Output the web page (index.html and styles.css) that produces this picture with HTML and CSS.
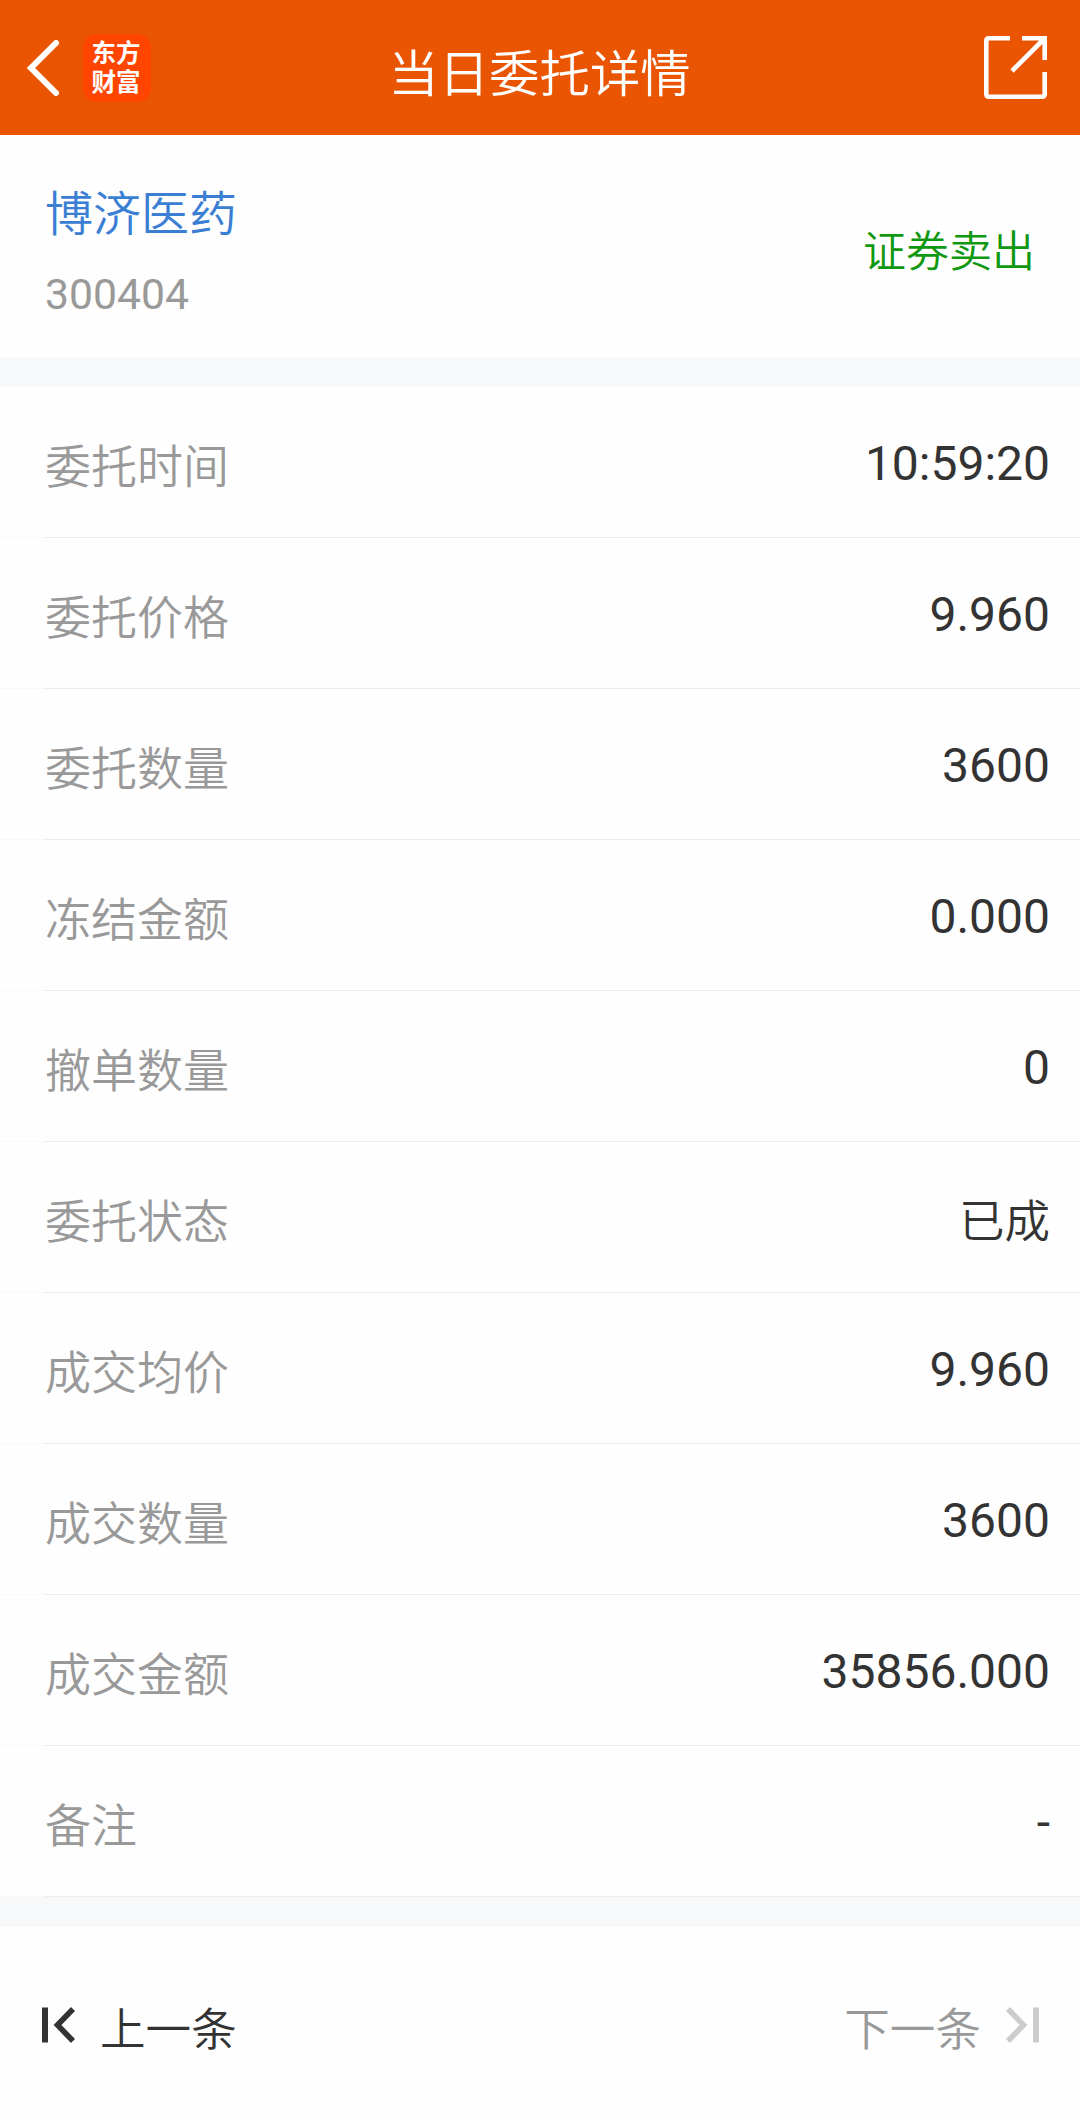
FILE: index.html
```
<!DOCTYPE html>
<html lang="zh-CN">
<head>
  <meta charset="UTF-8" />
  <meta name="viewport" content="width=device-width, initial-scale=1.0" />
  <title>当日委托详情</title>
  <link rel="stylesheet" href="styles.css">
</head>
<body>
  <header class="header">
    <div class="header-left">
      <svg class="back" width="32" height="56" viewBox="0 0 32 56" fill="none" stroke="#fff" stroke-width="6">
        <path d="M29 3 L4 28 L29 53" stroke-linecap="round" />
      </svg>
      <div class="logo"><span>东方</span><span>财富</span></div>
    </div>
    <h1>当日委托详情</h1>
    <svg class="share" width="64" height="64" viewBox="0 0 64 64" fill="none" stroke="#fff" stroke-width="4.6">
      <path d="M26 2.3 H5 Q2.3 2.3 2.3 5 V58 Q2.3 60.7 5 60.7 H58 Q60.7 60.7 60.7 58 V36" />
      <path d="M38 2.3 H60.7 V24 M60 3 L28 35" />
    </svg>
  </header>
  <section class="stock">
    <div>
      <div class="stock-name">博济医药</div>
      <div class="stock-code">300404</div>
    </div>
    <div class="side">证券卖出</div>
  </section>
  <section class="list">
    <div class="row"><span class="label">委托时间</span><span class="value">10:59:20</span></div>
    <div class="row"><span class="label">委托价格</span><span class="value">9.960</span></div>
    <div class="row"><span class="label">委托数量</span><span class="value">3600</span></div>
    <div class="row"><span class="label">冻结金额</span><span class="value">0.000</span></div>
    <div class="row"><span class="label">撤单数量</span><span class="value">0</span></div>
    <div class="row"><span class="label">委托状态</span><span class="value value-cn">已成</span></div>
    <div class="row"><span class="label">成交均价</span><span class="value">9.960</span></div>
    <div class="row"><span class="label">成交数量</span><span class="value">3600</span></div>
    <div class="row"><span class="label">成交金额</span><span class="value">35856.000</span></div>
    <div class="row"><span class="label">备注</span><span class="value">-</span></div>
  </section>
  <footer class="pager">
    <div class="pager-item">
      <svg width="34" height="36" viewBox="0 0 34 36" fill="none" stroke="#333">
        <path d="M3 0.5 V35.5" stroke-width="6" />
        <path d="M31 2 L15.5 18 L31 34" stroke-width="5.6" />
      </svg>
      <span>上一条</span>
    </div>
    <div class="pager-item disabled">
      <span>下一条</span>
      <svg width="34" height="36" viewBox="0 0 34 36" fill="none" stroke="#ccc">
        <path d="M31 0.5 V35.5" stroke-width="6" />
        <path d="M3 2 L18.5 18 L3 34" stroke-width="5.6" />
      </svg>
    </div>
  </footer>
</body>
</html>
```
FILE: styles.css
```
* {
  box-sizing: border-box;
}
body {
  margin: 0;
  min-height: 100vh;
  background: #fefefe;
  color: #333;
  font-family: Roboto, "Noto Sans CJK SC", sans-serif;
}
.header {
  display: grid;
  grid-template-columns: 1fr auto 1fr;
  align-items: center;
  height: 135px;
  padding: 0 32px 0 27px;
  background: #ea5504;
  color: #fff;
}
.header-left {
  display: flex;
  align-items: center;
  gap: 24px;
}
.back {
  display: block;
}
.logo {
  display: flex;
  flex-direction: column;
  align-items: center;
  justify-content: center;
  width: 68px;
  height: 68px;
  border-radius: 14px;
  background: #ff4500;
  font-size: 24.5px;
  font-weight: 700;
  line-height: 29px;
  padding: 0 2px 0 0;
}
.header h1 {
  margin: 14px -2px 0 2px;
  font-size: 50.4px;
  font-weight: 350;
  line-height: 72px;
}
.share {
  justify-self: end;
}
.stock {
  display: flex;
  justify-content: space-between;
  height: 222px;
  padding: 44px 45px 0;
}
.stock-name {
  color: #3b7fd4;
  font-size: 48px;
  font-weight: 350;
  line-height: 72px;
}
.stock-code {
  margin-top: 13px;
  color: #999;
  font-size: 42.7px;
  line-height: 60px;
}
.side {
  margin-top: 41px;
  color: #109810;
  font-size: 43px;
  font-weight: 350;
  line-height: 64px;
}
.list {
  border-top: 30px solid #f7f8fa;
}
.row {
  display: flex;
  justify-content: space-between;
  height: 151px;
  padding: 0 30px 0 45px;
  background: linear-gradient(to right, #f8f8f8 45px, #ebebeb 45px) bottom / 100% 1px no-repeat;
}
.label {
  padding-top: 7px;
  color: #999;
  font-size: 46px;
  font-weight: 350;
  line-height: 146px;
}
.value {
  padding-top: 2px;
  font-size: 48px;
  line-height: 150px;
}
.value-cn {
  padding-top: 8px;
  font-size: 45.5px;
  font-weight: 350;
  line-height: 146px;
}
.pager {
  display: flex;
  justify-content: space-between;
  border-top: 30px solid #f7f8fa;
  padding: 66px 41px 0 42px;
}
.pager-item {
  display: flex;
  align-items: center;
  gap: 24px;
  height: 64px;
  font-size: 45.6px;
  font-weight: 350;
  line-height: 64px;
}
.pager-item span {
  padding-top: 11px;
}
.disabled {
  color: #999;
}
```
